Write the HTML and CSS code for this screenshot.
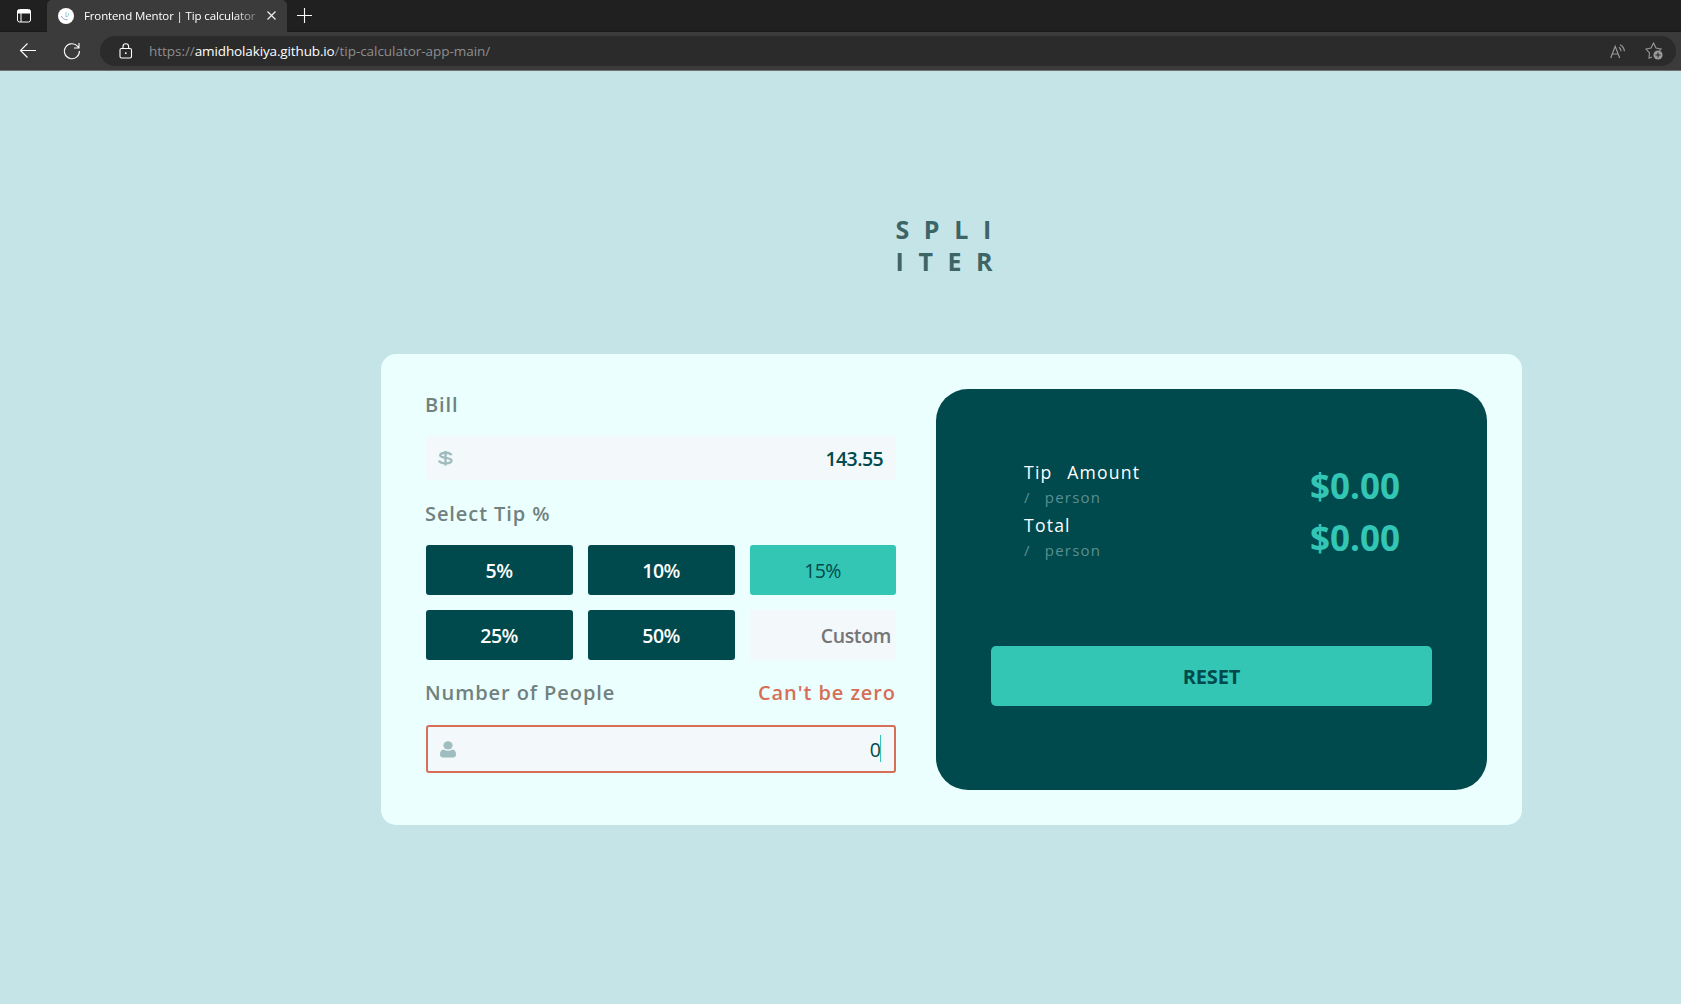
FILE: index.html
```
<!DOCTYPE html>
<html lang="en">
<head>
<meta charset="utf-8">
<title>Frontend Mentor | Tip calculator app</title>
<link rel="stylesheet" href="styles.css">
</head>
<body>
<header class="browser">
  <div class="tabs">
    <svg class="tab-actions" width="16" height="16" viewBox="0 0 16 16" fill="none" stroke="#fff"><rect x="1.5" y="1.5" width="13" height="12.5" rx="2"/><path d="M1.5 3h13M2 4.5h12" stroke-width="2"/><path d="M5 4v10"/></svg>
    <div class="tab">
      <svg class="favicon" width="16" height="16" viewBox="0 0 16 16"><circle cx="8" cy="8" r="8" fill="#fff"/><path d="M8 4v5M10.5 5.5v2M8 9l2-1" stroke="#8ecbe0" fill="none"/><path d="M3.5 8c1 3 3.500 4 6 3.500" stroke="#9a9fc4" fill="none"/></svg>
      <span class="tab-title">Frontend Mentor | Tip calculator</span>
      <svg class="close" width="9" height="9" viewBox="0 0 9 9" stroke="#eee" stroke-width="1.2"><path d="M.5.5l8 8M8.500.5l-8 8"/></svg>
    </div>
    <svg class="new-tab" width="15" height="15" viewBox="0 0 15 15" stroke="#fff" stroke-width="1.1"><path d="M7.500 0v15M0 7.500h15"/></svg>
  </div>
  <div class="toolbar">
    <svg class="back" width="17" height="16" viewBox="0 0 17 16" fill="none" stroke="#fff" stroke-width="1.1"><path d="M16 7.500H.5M7.500.5L.5 7.500l7 7"/></svg>
    <svg class="reload" width="18" height="18" viewBox="0 0 18 18" fill="none" stroke="#fff" stroke-width="1.1"><path d="M16.400 9A7.500 7.500 0 1 1 14.500 4.200L16 5.800M16 1v5h-5"/></svg>
    <div class="address">
      <svg class="lock" width="14" height="16" viewBox="0 0 14 16" fill="none" stroke="#fff" stroke-width="1.100"><rect x="1" y="5.500" width="11.500" height="9.500" rx="1.500"/><path d="M4 5.500V3.500a2.800 2.800 0 0 1 5.600 0v2"/><circle cx="6.800" cy="10.200" r=".9" fill="#fff" stroke="none"/></svg>
      <span class="url">https://<b>amidholakiya.github.io</b>/tip-calculator-app-main/</span>
      <svg class="read" width="16" height="15" viewBox="0 0 16 15" fill="none" stroke="#9a9a9a" stroke-width="1.200"><path d="M.7 14L5.200 2.300 9.700 14M2.300 10h5.800M9 3.200q2 1.500 2 4M10 .7q4 2 4.400 6.500"/></svg>
      <svg class="star" width="18" height="18" viewBox="0 0 18 18" fill="none" stroke="#9a9a9a" stroke-width="1.100"><path d="M7 15l-3 1.200.500-5.200L1 7l5-1 2.500-5L11 6l5 1-1.500 1.500"/><circle cx="13" cy="13" r="4.600" fill="#9a9a9a" stroke="none"/><path d="M13 10.500v5M10.500 13h5" stroke="#2b2b2b"/></svg>
    </div>
  </div>
</header>
<main class="page">
  <h1 class="logo">SPLI<br>ITER</h1>
  <section class="card">
    <form class="form">
      <label class="label" for="bill">Bill</label>
      <div class="field">
        <svg class="dollar" width="15" height="16" viewBox="0 0 15 16" fill="none" stroke="#9fbcbf"><path d="M13.300 5.200C12.600 1.900 2.200 1.800 2.200 5.200c0 3.600 11.300 1.700 11.300 5.400 0 3.700-11.600 3.700-12.400 0" stroke-width="2.400"/><path d="M7.500 1v14.500" stroke-width="2.400"/></svg>
        <input class="value bill" id="bill" value="143.55">
      </div>
      <span class="label tip-label">Select Tip %</span>
      <div class="tips">
        <button class="tip" type="button">5%</button>
        <button class="tip" type="button">10%</button>
        <button class="tip active" type="button">15%</button>
        <button class="tip" type="button">25%</button>
        <button class="tip" type="button">50%</button>
        <input class="custom" placeholder="Custom">
      </div>
      <div class="label people-label"><label for="people">Number of People</label><span class="error">Can't be zero</span></div>
      <div class="field invalid">
        <svg class="person" width="16" height="17" viewBox="0 0 16 17" fill="#9fbcbf"><ellipse cx="8" cy="4.300" rx="4.600" ry="4"/><path d="M3.500 8.500Q8 11 12.500 8.500Q16 9 16 13.500Q16 16.500 13 16.500H3Q0 16.500 0 13.500Q0 9 3.500 8.500Z"/></svg>
        <input class="value people" id="people" value="0">
        <i class="caret"></i>
      </div>
    </form>
    <section class="panel">
      <div class="summary">
        <dl class="names">
          <dt>Tip Amount</dt><dd>/ person</dd>
          <dt>Total</dt><dd>/ person</dd>
        </dl>
        <div class="amounts"><strong>$0.00</strong><strong>$0.00</strong></div>
      </div>
      <button class="reset" type="button">RESET</button>
    </section>
  </section>
</main>
</body>
</html>
```
FILE: styles.css
```
* { box-sizing: border-box; margin: 0; }
body {
  height: 1004px;
  overflow: hidden;
  background: #c5e4e7;
  color: #00494d;
  font-family: "Open Sans", "Noto Sans", sans-serif;
}
svg { display: block; flex: none; overflow: visible; }
button, input { border: 0; padding: 0; font: inherit; color: inherit; outline: 0; }

.browser { height: 71px; background: #3b3b3b; border-bottom: 1px solid #707070; }
.tabs { display: flex; align-items: center; height: 32px; background: #202020; border-bottom: 1px solid #1a1a1a; }
.tab-actions { margin-left: 16px; }
.tab {
  display: flex;
  align-items: center;
  width: 240px;
  height: 32px;
  margin-left: 15px;
  padding: 0 11px;
  background: #3b3b3b;
  border-radius: 5px 5px 0 0;
}
.tab-title {
  width: 173px;
  margin: 0 11px 0 10px;
  white-space: nowrap;
  color: #fff;
  font-size: 11.5px;
  letter-spacing: -0.14px;
  -webkit-mask-image: linear-gradient(to right, #000 150px, transparent 180px);
}
.new-tab { margin-left: 10px; }
.toolbar { display: flex; align-items: center; height: 38px; }
.back { margin-left: 20px; }
.reload { margin-left: 26px; }
.address {
  display: flex;
  align-items: center;
  width: 1576px;
  height: 30px;
  margin-left: 19px;
  padding: 0 13px 0 19px;
  background: #2b2b2b;
  border-radius: 15px;
}
.url { flex: 1; margin-left: 16px; color: #8e8e8e; font-size: 13.5px; letter-spacing: -0.04px; }
.url b { color: #fff; font-weight: 400; letter-spacing: -0.130px; }
.star { margin-left: 19px; }

.page { display: flex; flex-direction: column; padding-left: 381px; }
.logo {
  margin: 142px 0 0 514.500px;
  color: #3d6466;
  font-size: 25px;
  line-height: 32px;
  letter-spacing: 14.600px;
}
.card {
  display: flex;
  justify-content: space-between;
  width: 1141px;
  height: 471px;
  margin-top: 77px;
  padding: 35px 35px 35px 45px;
  background: #ebfffe;
  border-radius: 15px;
}
.form { display: flex; flex-direction: column; width: 470px; }
.label {
  padding-top: 1px;
  margin: 0 0 0 -1px;
  height: 30px;
  color: #71817f;
  font-size: 20px;
  font-weight: 600;
  line-height: 30px;
  letter-spacing: 0.920px;
}
.tip-label { margin-top: 18px; }
.people-label { display: flex; justify-content: space-between; margin-top: 17px; }
.error { color: #d66f58; }
.field {
  position: relative;
  display: flex;
  align-items: center;
  height: 44px;
  margin-top: 17px;
  padding: 0 13px 0 12px;
  background: #f3f8fb;
  border-radius: 3px;
}
.value { flex: 1; min-width: 0; height: 100%; background: transparent; text-align: right; }
.bill { font-size: 19.500px; font-weight: 600; letter-spacing: -0.600px; }
.field.invalid { height: 48px; margin-top: 18px; border: 2px solid #d66f58; }
.people { font-size: 19.500px; }
.caret { position: absolute; right: 13px; top: 8px; width: 1px; height: 27px; background: #33c6b5; }
.tips {
  display: grid;
  grid-template-columns: 147px 147px 146px;
  grid-auto-rows: 50px;
  gap: 15px;
  margin-top: 17px;
}
.tip {
  padding-right: 1px;
  background: #00494d;
  border-radius: 3px;
  color: #fff;
  font-size: 19.500px;
  font-weight: 600;
  letter-spacing: -0.600px;
}
.tip.active { background: #33c6b5; color: #00494d; font-weight: 500; }
.custom { width: 146px; padding-right: 5px; background: #f3f8fb; font-size: 19.500px; font-weight: 600; letter-spacing: -0.350px; text-align: right; }
.custom::placeholder { color: #757575; }

.panel { width: 551px; height: 401px; padding: 70px 55px 0; background: #00494d; border-radius: 32px; }
.summary { display: flex; justify-content: space-between; height: 187px; padding: 0 32px 0 33px; }
.names { letter-spacing: 1.200px; word-spacing: 9px; }
.names dt { color: #fff; font-size: 17.600px; line-height: 26px; }
.names dd { margin-bottom: 3px; color: #5b8f92; font-size: 15px; line-height: 24px; }
.amounts { display: flex; flex-direction: column; margin-top: 1px; color: #33c6b5; font-size: 35px; line-height: 52px; }
.reset {
  width: 441px;
  height: 60px;
  background: #33c6b5;
  border-radius: 5px;
  font-size: 20px;
  font-weight: 700;
  letter-spacing: -0.150px;
}
```
